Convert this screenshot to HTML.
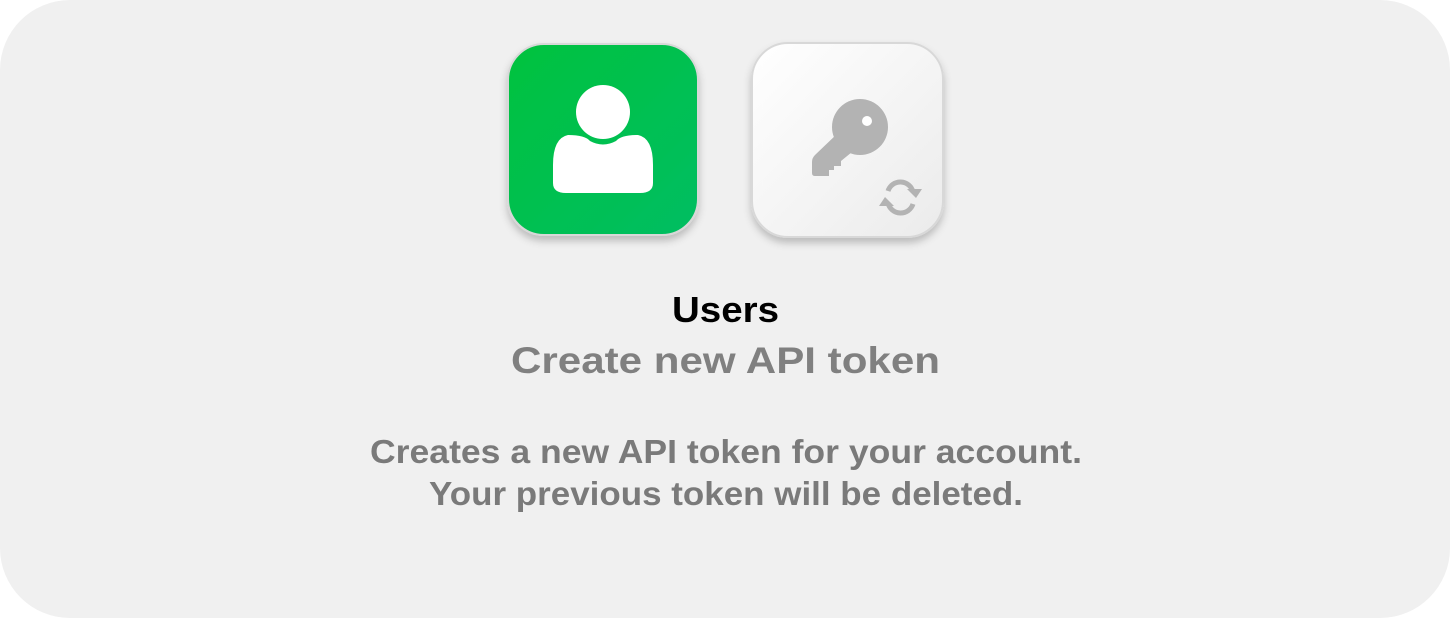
<!DOCTYPE html>
<html><head><style>
html,body{margin:0;padding:0;background:#fff;width:1450px;height:618px;overflow:hidden}
.card{position:absolute;left:0;top:0;width:1450px;height:618px;background:#f0f0f0;border-radius:70px}
</style></head><body>
<div class="card"></div>
<svg width="1450" height="618" style="position:absolute;left:0;top:0">
<defs>
<linearGradient id="g" x1="0" y1="0" x2="1" y2="1"><stop offset="0" stop-color="#00c23e"/><stop offset="1" stop-color="#00be62"/></linearGradient>
<linearGradient id="w" x1="0" y1="0" x2="1" y2="1"><stop offset="0" stop-color="#ffffff"/><stop offset="1" stop-color="#ebebeb"/></linearGradient>
<filter id="s" x="-20%" y="-20%" width="140%" height="150%"><feDropShadow dx="0" dy="5" stdDeviation="4" flood-color="#000" flood-opacity="0.22"/></filter>
</defs>
<rect x="508" y="44" width="190" height="191" rx="36" fill="url(#g)" stroke="#d8d8d8" stroke-width="2" filter="url(#s)"/>
<circle cx="603" cy="112" r="27" fill="#fff"/>
<path d="M568 135 Q585 135 590 141 Q603 148 616 141 Q621 135 638 135 Q653 138 653 165 L653 183 Q653 193 640 193 L566 193 Q553 193 553 183 L553 165 Q553 138 568 135 Z" fill="#fff"/>
<rect x="752" y="43" width="191" height="194" rx="36" fill="url(#w)" stroke="#d8d8d8" stroke-width="2" filter="url(#s)"/>
<circle cx="860" cy="127" r="28" fill="#b3b3b3"/>
<circle cx="867" cy="121" r="5" fill="#fff"/>
<path d="M838 133 L815 155 Q812 158 812 162 L812 173 Q812 176 815 176 L829 176 L829 170 L834 170 L834 166 L841 166 L841 161 L852 152 Z" fill="#b3b3b3"/>
<g fill="none" stroke="#b3b3b3" stroke-width="5">
<path d="M888 191 A13 13 0 0 1 913 192"/>
<path d="M913 204 A13 13 0 0 1 888 203"/>
</g>
<path d="M907 189 L922 189 L916 198 Z" fill="#b3b3b3"/>
<path d="M894 206 L879 206 L885 197 Z" fill="#b3b3b3"/>
<g font-family="Liberation Sans, sans-serif" text-anchor="start">
<text x="672" y="322" font-size="36" font-weight="bold" fill="#000" textLength="107" lengthAdjust="spacingAndGlyphs">Users</text>
<text x="511" y="373" font-size="37" font-weight="bold" fill="#808080" textLength="429" lengthAdjust="spacingAndGlyphs">Create new API token</text>
<text x="370" y="463" font-size="33" fill="#7a7a7a" font-weight="bold" textLength="712" lengthAdjust="spacingAndGlyphs">Creates a new API token for your account.</text>
<text x="429" y="505" font-size="33" fill="#7a7a7a" font-weight="bold" textLength="594" lengthAdjust="spacingAndGlyphs">Your previous token will be deleted.</text>
</g>
</svg>
</body></html>
